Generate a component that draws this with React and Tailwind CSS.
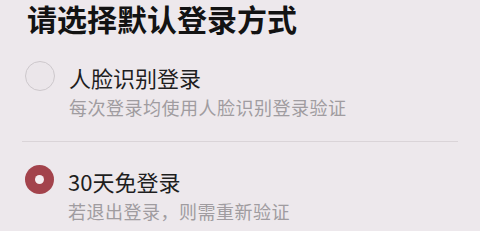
import React, { useState } from "react";

const options = [
  { id: "face", title: "人脸识别登录", desc: "每次登录均使用人脸识别登录验证" },
  { id: "thirty", title: "30天免登录", desc: "若退出登录，则需重新验证" },
];

const Radio = ({ checked }) =>
  checked ? (
    <div className="w-[29px] h-[29px] rounded-full bg-[#a3434c] flex items-center justify-center flex-shrink-0">
      <div className="w-[9px] h-[9px] rounded-full bg-[#f4eef1]" />
    </div>
  ) : (
    <div className="w-[30px] h-[30px] rounded-full border border-[#cdc8cc] bg-[#ebe6ea] flex-shrink-0" />
  );

const App = () => {
  const [selected, setSelected] = useState("thirty");

  return (
    <div
      className="w-[480px] h-[231px] overflow-hidden bg-[#ede8ec] px-[22px]"
      style={{ fontFamily: '"Noto Sans CJK SC", "Noto Sans", sans-serif' }}
    >
      <h1 className="pl-[5px] text-[30px] leading-[36px] font-bold text-[#131313]">
        请选择默认登录方式
      </h1>
      <div className="mt-[25px]">
        {options.map((opt, i) => (
          <div key={opt.id}>
            {i > 0 && <div className="mt-[21px] mb-[23px] border-t border-[#dad4d8]" />}
            <div
              className="flex items-start gap-[14px] pl-[3px] cursor-pointer"
              onClick={() => setSelected(opt.id)}
            >
              <Radio checked={selected === opt.id} />
              <div className="mt-[1px]">
                <div className="text-[22px] leading-[30px] text-[#1e1e1e]">{opt.title}</div>
                <div className="mt-[2px] text-[18px] leading-[26px] tracking-[0.5px] text-[#a09ca0]">
                  {opt.desc}
                </div>
              </div>
            </div>
          </div>
        ))}
      </div>
    </div>
  );
};

export default App;
